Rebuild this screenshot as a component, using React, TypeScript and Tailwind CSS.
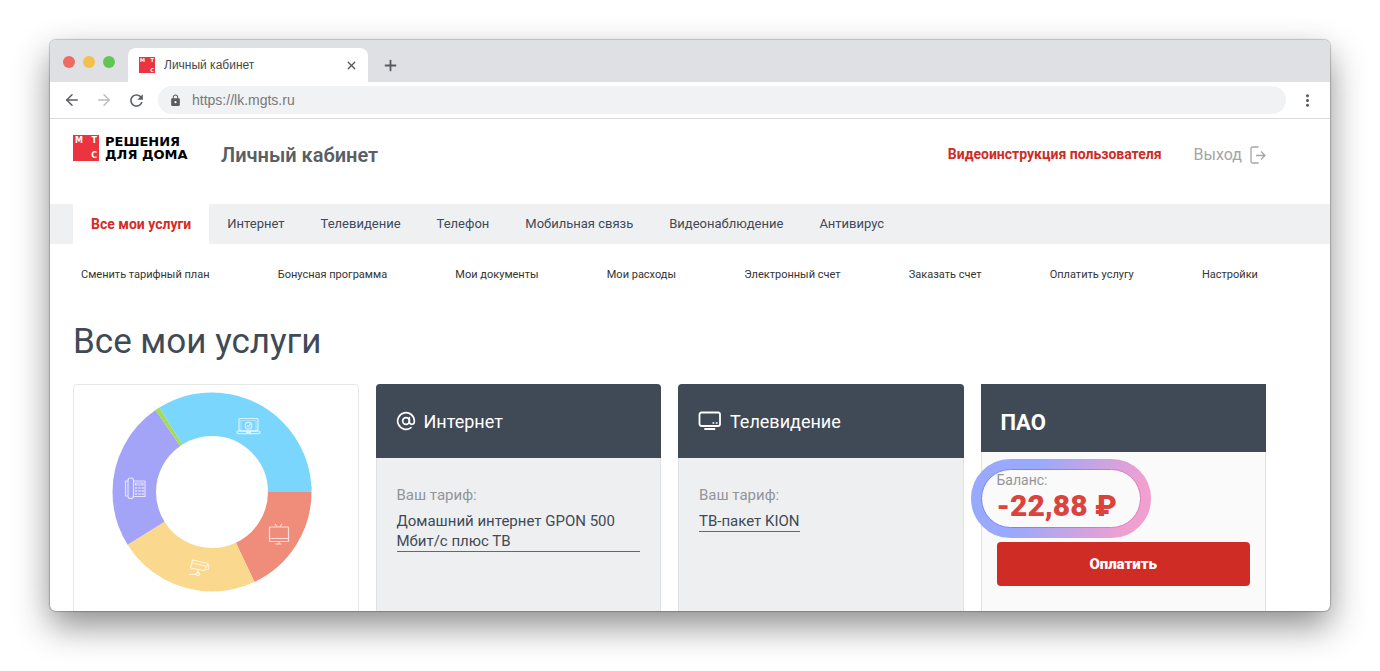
import type { ReactNode } from "react";
import clsx from "clsx";
import { ArrowLeft, ArrowRight, AtSign, Plus, X } from "lucide-react";
import { MdLock, MdMoreVert, MdRefresh } from "react-icons/md";

const TABS = [
  "Все мои услуги",
  "Интернет",
  "Телевидение",
  "Телефон",
  "Мобильная связь",
  "Видеонаблюдение",
  "Антивирус",
];

const LINKS = [
  "Сменить тарифный план",
  "Бонусная программа",
  "Мои документы",
  "Мои расходы",
  "Электронный счет",
  "Заказать счет",
  "Оплатить услугу",
  "Настройки",
];

// angles in degrees, clockwise from three o'clock
const SEGMENTS = [
  { color: "#f08c7a", from: 0, to: 64.7 },
  { color: "#fad98f", from: 64.7, to: 148 },
  { color: "#a3a3f7", from: 148, to: 235.4 },
  { color: "#a5dc50", from: 235.4, to: 238 },
  { color: "#7bd6fd", from: 238, to: 360 },
];

function ServicesChart() {
  return (
    <svg viewBox="0 0 200 200" className="h-[200px] w-[200px]" fill="none">
      {SEGMENTS.map((s) => (
        <circle
          key={s.color}
          cx="100"
          cy="100"
          r="77.75"
          stroke={s.color}
          strokeWidth="43.5"
          pathLength={360}
          strokeDasharray={`${s.to - s.from} ${360 - s.to + s.from}`}
          strokeDashoffset={-s.from}
        />
      ))}
      <g stroke="#fff" strokeOpacity="0.7" strokeWidth="1.2" strokeLinejoin="round">
        {/* laptop */}
        <rect x="127" y="26.500" width="19" height="12.500" rx="1" />
        <rect x="129" y="28.500" width="15" height="10.500" strokeOpacity="0.35" />
        <rect x="125" y="39" width="23" height="2.600" rx="1.300" />
        <circle cx="136.500" cy="33.700" r="3.300" />
        <path d="m135 33.500 1.300 1.300 2.400-3M134 40.300h5" />
        {/* tv */}
        <rect x="157.500" y="135" width="19" height="14.500" rx="0.500" />
        <path d="M157.500 146.500h19M165 134.500l-2-2.500M168 134.500l2-2.500M167 149.500v2M163.500 152h6" />
        {/* camera */}
        <path d="m80.500 168 15.500 3.500-3.500 7-14-2.500zM79.500 171l14 2.800M92.500 177.500h4v-5M86 177v5M77 182.500h7" />
        <circle cx="86" cy="182" r="1.600" />
        {/* phone */}
        <rect x="16" y="86" width="5.500" height="20.500" rx="2.500" />
        <path d="M16 89h-2.500v15H16M21.500 89h11.500v15.500H21.500M23.500 91h7.500v2h-7.500z" />
        <path d="M23 96h9M23 99h9M23 102h9" strokeDasharray="2.300 1" strokeWidth="1.700" />
      </g>
    </svg>
  );
}

function MtsLogo({ small = false }: { small?: boolean }) {
  return (
    <span
      className={clsx(
        "grid shrink-0 grid-cols-2 content-between bg-[#eb3440] font-['DejaVu_Sans',sans-serif] font-bold text-white",
        small ? "h-4 w-4 px-px text-[5px] leading-[6px]" : "h-[26px] w-[26px] px-0.5 py-px text-[8px] leading-[9px]",
      )}
    >
      <span>М</span>
      <span className="text-right">Т</span>
      <span className="col-start-2 text-right">С</span>
    </span>
  );
}

function LogoutIcon() {
  return (
    <svg viewBox="0 0 16 18" className="h-[18px] w-4" fill="none" stroke="currentColor" strokeWidth="1.3">
      <path d="M8.500 1H2.500Q1 1 1 2.500v13Q1 17 2.500 17h6M6 9.500h8.500M11 5.500l4 4-4 4" />
    </svg>
  );
}

function TvIcon() {
  return (
    <svg viewBox="0 0 24 20" className="h-5 w-6" fill="none" stroke="currentColor" strokeWidth="1.8">
      <rect x="1.500" y="1.500" width="20.500" height="13.500" rx="2" />
      <path d="M7 18h9.500" strokeLinecap="round" />
      <path d="M14.500 12h1.800M17.800 12h1.800" strokeWidth="1.500" />
    </svg>
  );
}

function Highlight() {
  return (
    <svg
      viewBox="0 0 180 79"
      className="pointer-events-none absolute -top-[13px] -left-[26px] h-[79px] w-[180px]"
      fill="none"
    >
      <defs>
        <linearGradient id="ring" x1="0" y1="0" x2="1" y2="0.15">
          <stop offset="0.35" stopColor="#99a9fd" />
          <stop offset="1" stopColor="#f09fd0" />
        </linearGradient>
        <linearGradient id="ringEdge" x1="0" y1="0" x2="1" y2="0.15">
          <stop offset="0.35" stopColor="#7486f5" />
          <stop offset="1" stopColor="#e07cbc" />
        </linearGradient>
      </defs>
      <rect x="5.250" y="5.250" width="169.500" height="68.500" rx="34.250" stroke="url(#ring)" strokeWidth="10.500" />
      <rect x="10.500" y="10.500" width="159" height="58" rx="29" stroke="url(#ringEdge)" />
    </svg>
  );
}

function ServiceCard({ icon, title, tariff }: { icon: ReactNode; title: string; tariff: string }) {
  return (
    <section className="flex flex-col rounded-t border border-[#dfe1e3] bg-[#eeeff1]">
      <h2 className="-mx-px -mt-px flex h-[74px] items-center gap-2 rounded-t bg-[#404a56] px-5 text-[18px] text-white">
        {icon}
        {title}
      </h2>
      <div className="px-5 pt-[27px] text-[15px] leading-5 text-[#404a56]">
        <p className="text-[#929599]">Ваш тариф:</p>
        <a href="#tariff" className="mt-1.5 inline-block border-b border-[#5f6873]">
          {tariff}
        </a>
      </div>
    </section>
  );
}

function BrowserBar() {
  return (
    <div className="shrink-0 font-['Liberation_Sans',Arial,sans-serif]">
      <div className="flex h-[42px] items-end bg-[#dee0e4]">
        <div className="flex gap-2 self-center pt-px pl-[13px]">
          <button aria-label="Закрыть окно" className="h-3 w-3 rounded-full bg-[#ed6b60]" />
          <button aria-label="Свернуть окно" className="h-3 w-3 rounded-full bg-[#f5bf4f]" />
          <button aria-label="Развернуть окно" className="h-3 w-3 rounded-full bg-[#62c655]" />
        </div>
        <div className="ml-[13px] flex h-[34px] w-60 items-center rounded-t-lg bg-white pr-2.5 pl-[11px]">
          <MtsLogo small />
          <span className="ml-[9px] grow text-[12px] text-[#45484c]">Личный кабинет</span>
          <button aria-label="Закрыть вкладку" className="text-[#55585c]">
            <X size={13} strokeWidth={2.5} />
          </button>
        </div>
        <button aria-label="Новая вкладка" className="ml-3.5 flex h-[34px] items-center text-[#55585c]">
          <Plus size={17} strokeWidth={2.5} />
        </button>
      </div>
      <div className="flex h-[37px] items-center border-b border-[#d8dadd] pr-[13px] pl-[13px] text-[#5a5d61]">
        <button aria-label="Назад">
          <ArrowLeft size={18} />
        </button>
        <button aria-label="Вперёд" className="ml-3.5 text-[#babcbe]">
          <ArrowRight size={18} />
        </button>
        <button aria-label="Обновить" className="ml-3.5">
          <MdRefresh size={19} />
        </button>
        <label className="mx-3 flex h-7 grow items-center gap-2.5 rounded-full bg-[#f1f2f4] px-[11px]">
          <MdLock size={13} />
          <input
            aria-label="Адрес"
            defaultValue="https://lk.mgts.ru"
            className="grow bg-transparent text-[14px] text-[#77797c] outline-none"
          />
        </label>
        <button aria-label="Меню">
          <MdMoreVert size={19} />
        </button>
      </div>
    </div>
  );
}

export default function App() {
  return (
    <div className="h-screen bg-white px-[50px] pt-10 pb-[60px] font-[Roboto,sans-serif]">
      <div className="flex h-full flex-col overflow-hidden rounded-md bg-white shadow-[0_0_1px_1px_rgba(0,0,0,0.2),0_15px_35px_rgba(0,0,0,0.45)]">
        <BrowserBar />

        <header className="flex h-[85px] shrink-0 items-start pt-4 pr-16 pl-[23px]">
          <a href="#home" className="flex gap-1.5">
            <MtsLogo />
            <span className="w-[86px] font-['DejaVu_Sans',sans-serif] text-[13px] leading-[13px] font-bold whitespace-nowrap text-black">
              РЕШЕНИЯ
              <br />
              ДЛЯ ДОМА
            </span>
          </a>
          <div className="ml-[30px] flex h-[39px] grow items-center">
            <p className="grow text-[20px] font-semibold text-[#5a5e65]">Личный кабинет</p>
            <a href="#video" className="text-[14px] font-bold text-[#cf2c26]">
              Видеоинструкция пользователя
            </a>
            <a href="#exit" className="ml-8 flex items-center gap-2 text-[16px] text-[#a4a5a6]">
              Выход
              <LogoutIcon />
            </a>
          </div>
        </header>

        <nav className="flex h-10 shrink-0 bg-[#eff0f2] pl-[23px]">
          {TABS.map((tab, i) => (
            <a
              key={tab}
              href="#tab"
              className={clsx(
                "flex items-center px-[18px]",
                i === 0 ? "bg-white text-[14px] font-bold text-[#d52b26]" : "text-[13px] text-[#404a56]",
              )}
            >
              {tab}
            </a>
          ))}
        </nav>

        <main className="grow pr-16 pl-[23px]">
          <nav className="flex h-[62px] items-center justify-between px-2 text-[11px] text-[#333]">
            {LINKS.map((link) => (
              <a key={link} href="#link">
                {link}
              </a>
            ))}
          </nav>
          <h1 className="flex h-[78px] items-start pt-4 text-[35px] leading-10 text-[#404a56]">Все мои услуги</h1>

          <div className="grid h-60 grid-cols-4 gap-[17px]">
            <section className="rounded-t border border-[#e6e6e6] pt-[7px] pl-[38px]">
              <ServicesChart />
            </section>

            <ServiceCard
              icon={<AtSign size={20} />}
              title="Интернет"
              tariff="Домашний интернет GPON 500 Мбит/с плюс ТВ"
            />
            <ServiceCard icon={<TvIcon />} title="Телевидение" tariff="ТВ-пакет KION" />

            <section className="border border-[#dfe1e3] bg-[#fafafa]">
              <h2 className="-mx-px -mt-px flex h-[68px] items-center bg-[#404a56] px-5 pt-2 text-[22px] font-bold text-white">
                ПАО
              </h2>
              <div className="px-[15px] pt-5">
                <div className="relative h-[70px]">
                  <p className="text-[14px] leading-4 text-[#939598]">Баланс:</p>
                  <p className="text-[30px] leading-9 font-black text-[#db433d]">-22,88 ₽</p>
                  <Highlight />
                </div>
                <button className="h-11 w-full rounded bg-[#cf2c26] text-[15px] font-black text-white">Оплатить</button>
              </div>
            </section>
          </div>
        </main>
      </div>
    </div>
  );
}
